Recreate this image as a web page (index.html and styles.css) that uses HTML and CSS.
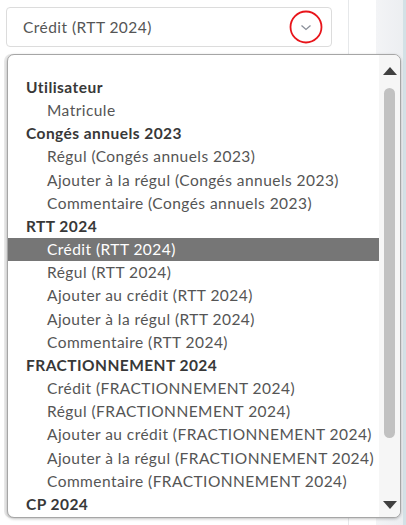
FILE: index.html
```html
<!DOCTYPE html>
<html lang="fr">
<head>
<meta charset="utf-8">
<link rel="stylesheet" href="styles.css">
</head>
<body>
<div class="app">
  <div class="main">
    <div class="select">
      <span class="select-value">Crédit (RTT 2024)</span>
      <span class="select-btn">
        <svg width="34" height="34" viewBox="0 0 34 34"><circle cx="17" cy="17" r="15.5" fill="none" stroke="#e8141a" stroke-width="1.8"/><path d="M12.5 15.5 L17 19.5 L21.5 15.5" fill="none" stroke="#8a8f99" stroke-width="1.3"/></svg>
      </span>
    </div>
  </div>
  <div class="gap"></div>
  <div class="side"></div>

  <div class="dropdown">
    <ul class="list">
      <li class="group">Utilisateur</li>
      <li class="opt">Matricule</li>
      <li class="group">Congés annuels 2023</li>
      <li class="opt">Régul (Congés annuels 2023)</li>
      <li class="opt">Ajouter à la régul (Congés annuels 2023)</li>
      <li class="opt">Commentaire (Congés annuels 2023)</li>
      <li class="group">RTT 2024</li>
      <li class="opt selected">Crédit (RTT 2024)</li>
      <li class="opt">Régul (RTT 2024)</li>
      <li class="opt">Ajouter au crédit (RTT 2024)</li>
      <li class="opt">Ajouter à la régul (RTT 2024)</li>
      <li class="opt">Commentaire (RTT 2024)</li>
      <li class="group">FRACTIONNEMENT 2024</li>
      <li class="opt">Crédit (FRACTIONNEMENT 2024)</li>
      <li class="opt">Régul (FRACTIONNEMENT 2024)</li>
      <li class="opt">Ajouter au crédit (FRACTIONNEMENT 2024)</li>
      <li class="opt">Ajouter à la régul (FRACTIONNEMENT 2024)</li>
      <li class="opt">Commentaire (FRACTIONNEMENT 2024)</li>
      <li class="group">CP 2024</li>
    </ul>
    <div class="scrollbar">
      <span class="arrow up"></span>
      <span class="thumb"></span>
      <span class="arrow down"></span>
    </div>
  </div>
</div>
</body>
</html>
```

FILE: styles.css
```css
* { box-sizing: border-box; }
html, body { margin: 0; padding: 0; }
body {
  width: 406px;
  height: 525px;
  overflow: hidden;
  background: #fff;
  font-family: Lato, "Open Sans", sans-serif;
}
.app {
  position: relative;
  display: flex;
  height: 525px;
}
.main {
  width: 349px;
  border-right: 1px solid #e6e8ea;
  padding: 7px 0 0 6px;
}
.select {
  width: 326px;
  height: 40px;
  border: 1px solid #dcdcdc;
  border-radius: 4px;
  display: flex;
  align-items: center;
  justify-content: space-between;
  padding: 0 8px 0 16px;
}
.select-value {
  font-size: 15.5px;
  letter-spacing: 0.45px;
  color: #555;
}
.select-btn {
  display: flex;
  width: 34px;
  height: 34px;
  margin-top: -1px;
}
.gap { width: 27px; }
.side {
  flex: 1;
  background: linear-gradient(to right, #f3f4f6, #eceef1);
  border-right: 3px solid #d3e1e6;
}
.dropdown {
  position: absolute;
  left: 7px;
  top: 54px;
  width: 394px;
  height: 464px;
  background: #fff;
  border: 1px solid #a6a6a6;
  border-radius: 7px;
  box-shadow: 0 1px 3px rgba(0,0,0,0.25), -3px 0 0 #eaeaea;
  overflow: hidden;
  display: flex;
}
.list {
  list-style: none;
  margin: 0;
  padding: 21px 0 0 0;
  width: 371px;
  font-size: 15.5px;
  letter-spacing: 0.45px;
}
.list li {
  height: 23.17px;
  line-height: 23.17px;
  white-space: nowrap;
}
.group {
  font-weight: bold;
  color: #383838;
  padding-left: 18px;
}
.opt {
  color: #555;
  padding-left: 39px;
}
.opt.selected {
  background: #767676;
  color: #fff;
}
.scrollbar {
  flex: 1;
  background: #f6f6f6;
  display: flex;
  flex-direction: column;
  align-items: center;
  padding-top: 12px;
}
.arrow {
  width: 0;
  height: 0;
  border-left: 7px solid transparent;
  border-right: 7px solid transparent;
}
.arrow.up { border-bottom: 8px solid #404040; }
.arrow.down { border-top: 8px solid #404040; margin-top: 63px; }
.thumb {
  width: 11px;
  height: 350px;
  margin-top: 13px;
  border-radius: 6px;
  background: #c1c1c1;
}
```
